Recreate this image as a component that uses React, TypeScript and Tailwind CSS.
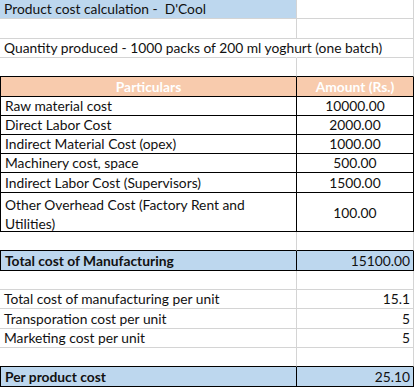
import React from 'react';

type Row = {
  a?: React.ReactNode;
  b?: string;
  h: number;
  kind?: 'title' | 'head' | 'table' | 'total' | 'plain';
  align?: 'center' | 'right';
  bottomBlack?: boolean;
  spill?: boolean;
};

const ROWS: Row[] = [
  { a: "Product cost calculation -  D'Cool", h: 19, kind: 'title' },
  { h: 20 },
  { a: 'Quantity produced - 1000 packs of 200 ml yoghurt (one batch)', h: 19, spill: true },
  { h: 19, bottomBlack: true },
  { a: 'Particulars', b: 'Amount (Rs.)', h: 20, kind: 'head' },
  { a: 'Raw material cost', b: '10000.00', h: 19, kind: 'table', align: 'center' },
  { a: 'Direct Labor Cost', b: '2000.00', h: 19, kind: 'table', align: 'center' },
  { a: 'Indirect Material Cost (opex)', b: '1000.00', h: 19, kind: 'table', align: 'center' },
  { a: 'Machinery cost, space', b: '500.00', h: 19, kind: 'table', align: 'center' },
  { a: 'Indirect Labor Cost (Supervisors)', b: '1500.00', h: 20, kind: 'table', align: 'center' },
  {
    a: (
      <>
        Other Overhead Cost (Factory Rent and
        <br />
        Utilities)
      </>
    ),
    b: '100.00',
    h: 39,
    kind: 'table',
    align: 'center',
  },
  { h: 19, bottomBlack: true },
  { a: 'Total cost of Manufacturing', b: '15100.00', h: 20, kind: 'total', align: 'right' },
  { h: 19 },
  { a: 'Total cost of manufacturing per unit', b: '15.1', h: 19, align: 'right' },
  { a: 'Transporation cost per unit', b: '5', h: 20, align: 'right' },
  { a: 'Marketing cost per unit', b: '5', h: 19, align: 'right' },
  { h: 19, bottomBlack: true },
  { a: 'Per product cost', b: '25.10', h: 20, kind: 'total', align: 'right' },
];

export default function App() {
  return (
    <div
      className="w-[415px] h-[388px] bg-white overflow-hidden text-[13.8px] text-[#111] leading-[17px]"
      style={{ fontFamily: 'Lato, "Open Sans", sans-serif' }}
    >
      {ROWS.map((r, i) => {
        const boxed = r.kind === 'head' || r.kind === 'table' || r.kind === 'total';
        const line = boxed || r.bottomBlack ? 'border-b-black' : 'border-b-[#d4d4d4]';
        // text spilling over into the empty cell hides the gridline, as in a sheet
        const dividerA = boxed
          ? 'border-r-black'
          : r.spill
          ? 'border-r-transparent'
          : 'border-r-[#d4d4d4]';
        const dividerB = boxed ? 'border-r-black' : 'border-r-[#d4d4d4]';
        const bgA =
          r.kind === 'head'
            ? 'bg-[#f8cbad]'
            : r.kind === 'total' || r.kind === 'title'
            ? 'bg-[#bdd7ee]'
            : 'bg-white';
        const bgB =
          r.kind === 'head'
            ? 'bg-[#f8cbad]'
            : r.kind === 'total'
            ? 'bg-[#bdd7ee]'
            : r.spill
            ? 'bg-transparent'
            : 'bg-white';
        const tall = r.h > 30;
        return (
          <div key={i} className="flex" style={{ height: r.h }}>
            <div
              className={`relative z-10 w-[297px] shrink-0 box-border border-b border-r ${line} ${dividerA} ${bgA} ${
                boxed ? 'border-l border-l-black' : ''
              } flex ${tall ? 'items-start pt-[2px]' : 'items-end pb-[1px]'} ${
                r.kind === 'head' ? 'justify-center text-white font-bold' : 'pl-[4px]'
              } ${r.kind === 'total' ? 'font-bold' : ''} whitespace-pre overflow-visible`}
            >
              <span className={tall ? 'leading-[19px]' : ''}>{r.a}</span>
            </div>
            <div
              className={`w-[117px] shrink-0 box-border border-b border-r ${line} ${dividerB} ${bgB} flex ${
                tall ? 'items-center' : 'items-end pb-[1px]'
              } ${
                r.kind === 'head' || r.align === 'center'
                  ? 'justify-center'
                  : 'justify-end pr-[3px]'
              } ${r.kind === 'head' ? 'text-white font-bold' : ''}`}
            >
              {r.b}
            </div>
          </div>
        );
      })}
    </div>
  );
}
